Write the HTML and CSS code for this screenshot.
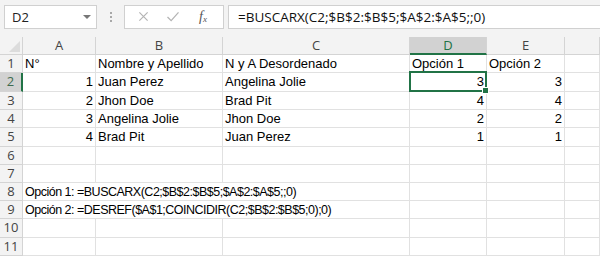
FILE: index.html
```html
<!DOCTYPE html>
<html>
<head>
  <meta charset="UTF-8">
  <title>BUSCARX</title>
  <link rel="stylesheet" href="styles.css">
</head>
<body>
  <div class="toolbar">
    <div class="name-box">
      <span>D2</span>
      <span class="caret"></span>
    </div>
    <div class="grip"><i></i><i></i><i></i></div>
    <div class="fx-buttons">
      <svg class="ico cancel" viewBox="0 0 12 12"><path d="M1.5 1.5L10.5 10.5M10.5 1.5L1.5 10.5" stroke="#b4b4b4" stroke-width="1.3" fill="none"/></svg>
      <svg class="ico enter" viewBox="0 0 14 12"><path d="M1 6.5L5 10.5L13 1.5" stroke="#b4b4b4" stroke-width="1.4" fill="none"/></svg>
      <span class="fx">f<sub>x</sub></span>
    </div>
    <div class="formula">=BUSCARX(C2;$B$2:$B$5;$A$2:$A$5;;0)</div>
  </div>

  <div class="sheet">
    <div class="hd corner"><span class="tri"></span></div>
    <div class="hd">A</div>
    <div class="hd">B</div>
    <div class="hd">C</div>
    <div class="hd active-col">D</div>
    <div class="hd">E</div>
    <div class="hd"></div>

    <div class="rn">1</div>
    <div class="c">N°</div>
    <div class="c">Nombre y Apellido</div>
    <div class="c">N y A Desordenado</div>
    <div class="c">Opción 1</div>
    <div class="c">Opción 2</div>
    <div class="c"></div>

    <div class="rn active-row">2</div>
    <div class="c num">1</div>
    <div class="c">Juan Perez</div>
    <div class="c">Angelina Jolie</div>
    <div class="c num selected">3</div>
    <div class="c num">3</div>
    <div class="c"></div>

    <div class="rn">3</div>
    <div class="c num">2</div>
    <div class="c">Jhon Doe</div>
    <div class="c">Brad Pit</div>
    <div class="c num">4</div>
    <div class="c num">4</div>
    <div class="c"></div>

    <div class="rn">4</div>
    <div class="c num">3</div>
    <div class="c">Angelina Jolie</div>
    <div class="c">Jhon Doe</div>
    <div class="c num">2</div>
    <div class="c num">2</div>
    <div class="c"></div>

    <div class="rn">5</div>
    <div class="c num">4</div>
    <div class="c">Brad Pit</div>
    <div class="c">Juan Perez</div>
    <div class="c num">1</div>
    <div class="c num">1</div>
    <div class="c"></div>

    <div class="rn">6</div>
    <div class="c"></div><div class="c"></div><div class="c"></div><div class="c"></div><div class="c"></div><div class="c"></div>

    <div class="rn">7</div>
    <div class="c"></div><div class="c"></div><div class="c"></div><div class="c"></div><div class="c"></div><div class="c"></div>

    <div class="rn">8</div>
    <div class="c span3">Opción 1: =BUSCARX(C2;$B$2:$B$5;$A$2:$A$5;;0)</div>
    <div class="c"></div><div class="c"></div><div class="c"></div>

    <div class="rn">9</div>
    <div class="c span3">Opción 2: =DESREF($A$1;COINCIDIR(C2;$B$2:$B$5;0);0)</div>
    <div class="c"></div><div class="c"></div><div class="c"></div>

    <div class="rn">10</div>
    <div class="c"></div><div class="c"></div><div class="c"></div><div class="c"></div><div class="c"></div><div class="c"></div>

    <div class="rn">11</div>
    <div class="c"></div><div class="c"></div><div class="c"></div><div class="c"></div><div class="c"></div><div class="c"></div>
  </div>
</body>
</html>
```

FILE: styles.css
```css
:root {
  --green: #217346;
  --grid: #e1e1e1;
  --head-bg: #f3f3f3;
  --head-line: #d4d4d4;
  --text: #000000;
}

body {
  margin: 0;
  width: 600px;
  height: 257px;
  overflow: hidden;
  background: #ffffff;
  font-family: "Open Sans", "Noto Sans", sans-serif;
}

.toolbar {
  display: flex;
  align-items: center;
  height: 37px;
  padding: 0 0 4px 4px;
  box-sizing: border-box;
  background: var(--head-bg);
}

.name-box {
  display: flex;
  align-items: center;
  justify-content: space-between;
  width: 93px;
  height: 24px;
  box-sizing: border-box;
  padding: 0 5px 0 7px;
  background: #fff;
  border: 1px solid #d0d0d0;
  font-size: 13px;
  color: #222;
}

.caret {
  width: 0;
  height: 0;
  border-left: 4px solid transparent;
  border-right: 4px solid transparent;
  border-top: 4px solid #777;
}

.grip {
  display: flex;
  flex-direction: column;
  gap: 2px;
  width: 27px;
  align-items: center;
}

.grip i {
  width: 2px;
  height: 2px;
  background: #a8a8a8;
}

.fx-buttons {
  display: flex;
  align-items: center;
  width: 100px;
  height: 24px;
  box-sizing: border-box;
  padding: 0 0 0 13px;
  background: #fff;
  border: 1px solid #d0d0d0;
}

.ico {
  width: 11px;
  height: 11px;
}

.enter {
  width: 14px;
  margin-left: 17px;
}

.fx {
  margin-left: 19px;
  font-family: "Liberation Serif", serif;
  font-style: italic;
  font-size: 14px;
  color: #555;
}

.fx sub {
  font-size: 9px;
  vertical-align: -1px;
}

.formula {
  flex: 1;
  height: 24px;
  margin-left: 4px;
  box-sizing: border-box;
  padding: 2px 9px;
  background: #fff;
  border: 1px solid #d0d0d0;
  border-right: none;
  font-size: 13.5px;
  line-height: 19px;
  color: #111;
  white-space: nowrap;
}

.sheet {
  display: grid;
  grid-template-columns: 23px 73px 127px 187px 77px 78px 1fr;
  grid-template-rows: 18px 18px 19px 18px 18px 19px 18px 18px 18px 18px 19px 18px;
  font-family: "Liberation Sans", Arial, sans-serif;
  font-size: 13px;
}

.hd,
.rn {
  background: var(--head-bg);
  border-right: 1px solid var(--head-line);
  border-bottom: 1px solid var(--head-line);
  box-sizing: border-box;
  text-align: center;
  font-family: "Open Sans", "Noto Sans", sans-serif;
  font-size: 13px;
  line-height: 17px;
  color: #444;
}

.corner {
  position: relative;
}

.tri {
  position: absolute;
  right: 2px;
  bottom: 2px;
  width: 0;
  height: 0;
  border-left: 11px solid transparent;
  border-bottom: 11px solid #dcdcdc;
}

.active-col {
  background: #d2d2d2;
  color: var(--green);
  border-bottom: 2px solid var(--green);
}

.active-row {
  background: #d2d2d2;
  color: #3f6b50;
  border-right: 2px solid var(--green);
}

.c {
  border-right: 1px solid var(--grid);
  border-bottom: 1px solid var(--grid);
  box-sizing: border-box;
  padding: 0 2px;
  line-height: 18px;
  color: var(--text);
  white-space: nowrap;
}

.num {
  text-align: right;
}

.span3 {
  grid-column: span 3;
  font-size: 12.5px;
  letter-spacing: -0.5px;
}

.selected {
  position: relative;
}

.selected::before {
  content: '';
  position: absolute;
  left: -1px;
  top: -2px;
  right: -1px;
  bottom: -1px;
  border: 2px solid var(--green);
}

.selected::after {
  content: '';
  position: absolute;
  right: -3px;
  bottom: -3px;
  width: 5px;
  height: 5px;
  background: var(--green);
  border: 1px solid #fff;
}
```
